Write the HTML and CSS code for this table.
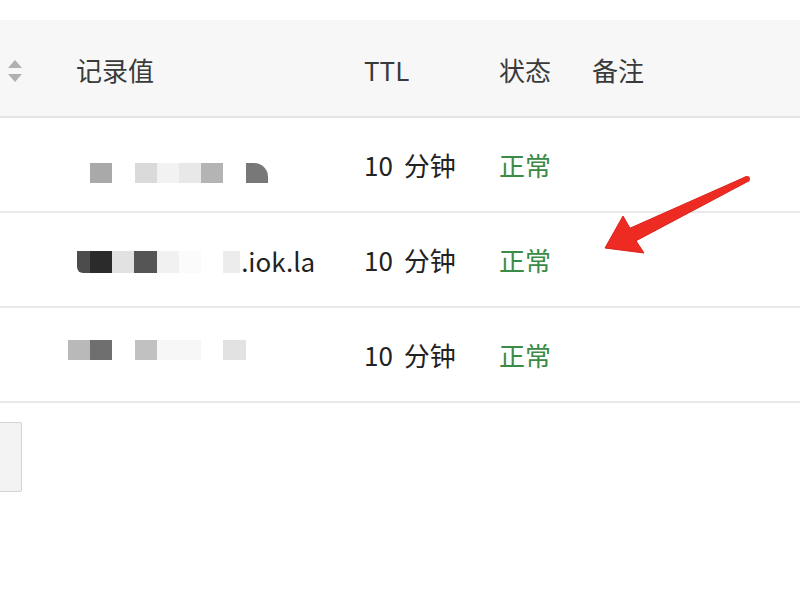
FILE: index.html
```html
<!DOCTYPE html>
<html lang="zh-CN">
<head>
<meta charset="utf-8">
<title>解析记录</title>
<link rel="stylesheet" href="styles.css">
</head>
<body>
<div class="page">
  <div class="table">
    <div class="row head">
      <div class="cell sort">
        <span class="tri up"></span>
        <span class="tri down"></span>
      </div>
      <div class="cell">记录值</div>
      <div class="cell">TTL</div>
      <div class="cell">状态</div>
      <div class="cell">备注</div>
    </div>
    <div class="row">
      <div class="cell"></div>
      <div class="cell value">
        <div class="mosaic r1">
          <span class="b"></span><span class="b c-a9"></span><span class="b"></span><span class="b c-d9"></span><span class="b c-f5"></span><span class="b c-e9"></span><span class="b c-b4"></span><span class="b"></span><span class="b c-78 tr"></span>
        </div>
      </div>
      <div class="cell ttl">10 分钟</div>
      <div class="cell ok">正常</div>
      <div class="cell"></div>
    </div>
    <div class="row">
      <div class="cell"></div>
      <div class="cell value">
        <div class="mosaic r2">
          <span class="b half c-4a bl"></span><span class="b c-2b"></span><span class="b c-e2"></span><span class="b c-54"></span><span class="b c-f1"></span><span class="b c-fb"></span><span class="b"></span><span class="b short c-ec"></span><span class="domain">.iok.la</span>
        </div>
      </div>
      <div class="cell ttl">10 分钟</div>
      <div class="cell ok">正常</div>
      <div class="cell"></div>
    </div>
    <div class="row">
      <div class="cell"></div>
      <div class="cell value">
        <div class="mosaic r3">
          <span class="b c-b9"></span><span class="b c-6f"></span><span class="b"></span><span class="b c-c1"></span><span class="b c-f8"></span><span class="b c-f8"></span><span class="b"></span><span class="b c-e2"></span>
        </div>
      </div>
      <div class="cell ttl">10 分钟</div>
      <div class="cell ok">正常</div>
      <div class="cell"></div>
    </div>
  </div>
  <div class="stub"></div>

  <svg class="arrow" width="800" height="600" viewBox="0 0 800 600">
    <polygon points="745.9,176.7 630,228.2 623,216 605,248 644,253 636,240.8 748.1,181.3" fill="#ee2b22" stroke="#d8221b" stroke-width="1" stroke-linejoin="round"/>
    <circle cx="747" cy="179" r="3" fill="#ee2b22"/>
  </svg>
</div>
</body>
</html>
```

FILE: styles.css
```css
* { box-sizing: border-box; }
html, body { margin: 0; padding: 0; background: #ffffff; }
body {
  font-family: "Noto Sans CJK SC", "Noto Sans", sans-serif;
  color: #2a2a2a;
  width: 800px;
  height: 600px;
  overflow: hidden;
}
.page {
  position: relative;
  width: 800px;
  height: 600px;
  padding-top: 20px;
}
.table { display: flex; flex-direction: column; }
.row {
  display: grid;
  grid-template-columns: 76px 288px 135px 93px 1fr;
  height: 95px;
  border-bottom: 2px solid #e9e9e9;
  align-items: center;
  font-size: 26px;
  color: #222;
}
.row.head {
  height: 98px;
  background: #f7f7f7;
  color: #3a3a3a;
  border-bottom: 2px solid #e4e4e4;
  padding-top: 4px;
}
.cell { white-space: nowrap; line-height: 1; }
.ttl { word-spacing: 5px; }
.ok { color: #3a8b45; }
.sort {
  display: flex;
  flex-direction: column;
  gap: 6px;
  padding-left: 8px;
  padding-top: 2px;
}
.tri {
  width: 0; height: 0;
  border-left: 7px solid transparent;
  border-right: 7px solid transparent;
}
.tri.up { border-bottom: 8px solid #b0b0b0; }
.tri.down { border-top: 8px solid #b0b0b0; }

.value { margin-left: -8px; }
.mosaic { display: flex; align-items: center; }
.mosaic .b { width: 22.2px; height: 20px; flex: none; }
.mosaic.r1 { margin-top: 16px; }
.mosaic.r2 { margin-top: 4px; }
.mosaic.r2 .b { height: 22px; }
.mosaic.r3 { margin-top: -10px; }
.mosaic .half { width: 13px; margin-left: 9px; }
.mosaic .short { width: 17px; }
.tr { border-top-right-radius: 14px; }
.bl { border-bottom-left-radius: 6px; }
.domain { margin-left: 1px; color: #222; font-size: 26px; position: relative; top: -1px; }

.c-a9 { background: #a9a9a9; }
.c-d9 { background: #dadada; }
.c-f5 { background: #f2f2f2; }
.c-e9 { background: #e8e8e8; }
.c-b4 { background: #b4b4b4; }
.c-78 { background: #787878; }
.c-4a { background: #4c4c4c; }
.c-2b { background: #2b2b2b; }
.c-e2 { background: #e2e2e2; }
.c-54 { background: #555555; }
.c-f1 { background: #f1f1f1; }
.c-fb { background: #fbfbfb; }
.c-ec { background: #ececec; }
.c-b9 { background: #b9b9b9; }
.c-6f { background: #6f6f6f; }
.c-c1 { background: #c1c1c1; }
.c-f8 { background: #f7f7f7; }

.stub {
  margin-top: 19px;
  margin-left: -10px;
  width: 32px;
  height: 70px;
  background: #f3f3f3;
  border: 1px solid #d3d3d3;
  border-radius: 2px;
}
.arrow { position: absolute; left: 0; top: 0; pointer-events: none; }
```
